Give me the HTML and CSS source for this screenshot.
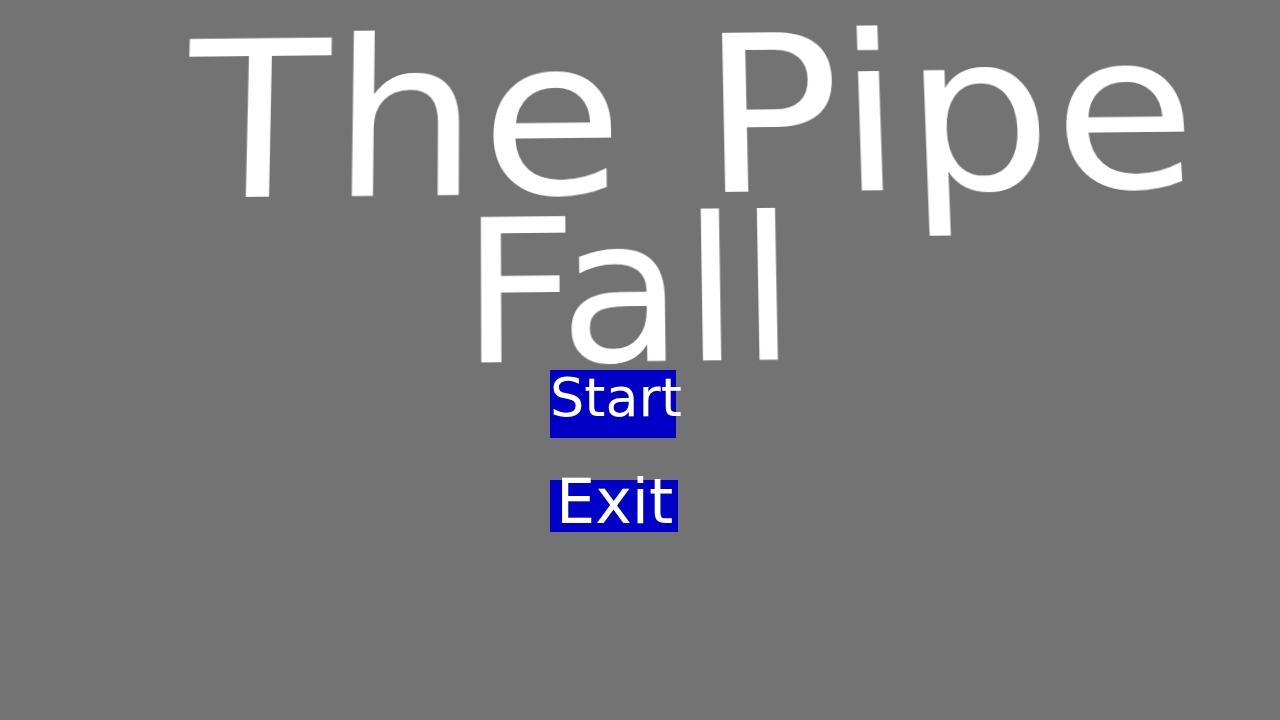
FILE: index.html
```html
<!DOCTYPE html>
<html lang="en">
<head>
<meta charset="utf-8">
<title>The Pipe Fall</title>
<link rel="stylesheet" href="styles.css">
</head>
<body>
<main class="screen">
  <h1 class="title">
    <span class="title-line title-top">The Pipe</span>
    <span class="title-line title-bottom">Fall</span>
  </h1>
  <nav class="menu">
    <button class="menu-btn btn-start" type="button">Start</button>
    <button class="menu-btn btn-exit" type="button">Exit</button>
  </nav>
</main>
</body>
</html>
```

FILE: styles.css
```css
html, body {
  margin: 0;
  padding: 0;
  width: 1280px;
  height: 720px;
  overflow: hidden;
  background: #737373;
}

.screen {
  display: flex;
  flex-direction: column;
  align-items: stretch;
  padding-top: 5px;
  font-family: "DejaVu Sans", "Noto Sans", sans-serif;
  color: #ffffff;
}

.title {
  margin: 0;
  font-weight: normal;
  display: flex;
  flex-direction: column;
}

.title-line {
  display: block;
  white-space: nowrap;
}

.title-top {
  font-size: 222px;
  line-height: 222px;
  height: 222px;
  letter-spacing: 2px;
  padding-left: 207px;
  transform-origin: 620px 188px;
  transform: perspective(1000px) rotateX(5deg) rotate(-0.6deg) scaleX(1.05);
}

.title-bottom {
  font-size: 201px;
  line-height: 201px;
  height: 201px;
  margin-top: -36px;
  padding-left: 463px;
  transform-origin: 620px 170px;
  transform: perspective(1000px) rotateX(3deg) rotate(-0.6deg) scaleX(1.01);
}

.menu {
  display: flex;
  flex-direction: column;
  align-items: flex-start;
  gap: 42px;
  margin-top: -22px;
  padding-left: 550px;
}

.menu-btn {
  display: block;
  margin: 0;
  border: 0;
  padding: 0;
  background: #0000c6;
  color: #ffffff;
  font-family: "DejaVu Sans", "Noto Sans", sans-serif;
  text-align: left;
  white-space: nowrap;
  overflow: visible;
  cursor: pointer;
}

.btn-start {
  width: 126px;
  height: 68px;
  font-size: 54px;
  line-height: 55px;
  padding-bottom: 13px;
}

.btn-exit {
  width: 128px;
  height: 52px;
  font-size: 62px;
  line-height: 43px;
  padding-left: 6px;
  padding-bottom: 9px;
}
```
